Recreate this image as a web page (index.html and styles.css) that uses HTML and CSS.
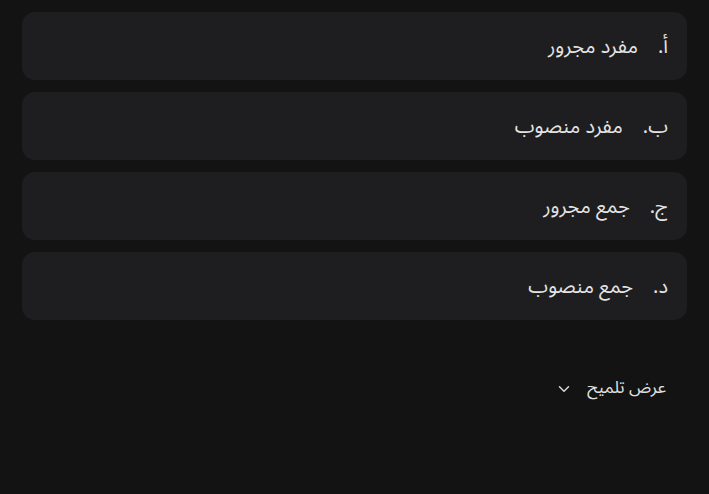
FILE: index.html
```html
<!DOCTYPE html>
<html lang="ar" dir="rtl">
<head>
<meta charset="utf-8">
<link rel="stylesheet" href="styles.css">
</head>
<body>
<div class="page">
  <ol class="options">
    <li class="option"><span class="mark">أ.</span><span class="label">مفرد مجرور</span></li>
    <li class="option"><span class="mark">ب.</span><span class="label">مفرد منصوب</span></li>
    <li class="option"><span class="mark">ج.</span><span class="label">جمع مجرور</span></li>
    <li class="option"><span class="mark">د.</span><span class="label">جمع منصوب</span></li>
  </ol>
  <button class="hint" type="button">
    <span class="hint-text">عرض تلميح</span>
    <svg class="chev" width="12" height="8" viewBox="0 0 12 8"><path d="M1.5 1.8 L6 6.2 L10.5 1.8" fill="none" stroke="#d8d8d8" stroke-width="1.5" stroke-linecap="round" stroke-linejoin="round"/></svg>
  </button>
</div>
</body>
</html>
```

FILE: styles.css
```css
html, body {
  margin: 0;
  padding: 0;
  background: #131313;
  height: 100%;
}
body {
  font-family: "Noto Sans Arabic", "Noto Sans", "DejaVu Sans", sans-serif;
  color: #e4e4e4;
}
.page {
  padding: 12px 22px 0 22px;
}
.options {
  list-style: none;
  margin: 0;
  padding: 0;
  display: flex;
  flex-direction: column;
  gap: 12px;
}
.option {
  box-sizing: border-box;
  height: 68px;
  background: #1e1e20;
  border-radius: 13px;
  display: flex;
  align-items: center;
  padding: 2px 19px 0 19px;
  font-size: 20px;
  line-height: 1;
}
.mark {
  min-width: 10px;
  margin-left: 20px;
}
.hint {
  margin-top: 60px;
  margin-right: 21px;
  background: none;
  border: none;
  padding: 0;
  color: #e0e0e0;
  font-family: inherit;
  font-size: 17px;
  line-height: 1;
  display: flex;
  align-items: center;
  gap: 17px;
}
.chev {
  display: block;
}
```
